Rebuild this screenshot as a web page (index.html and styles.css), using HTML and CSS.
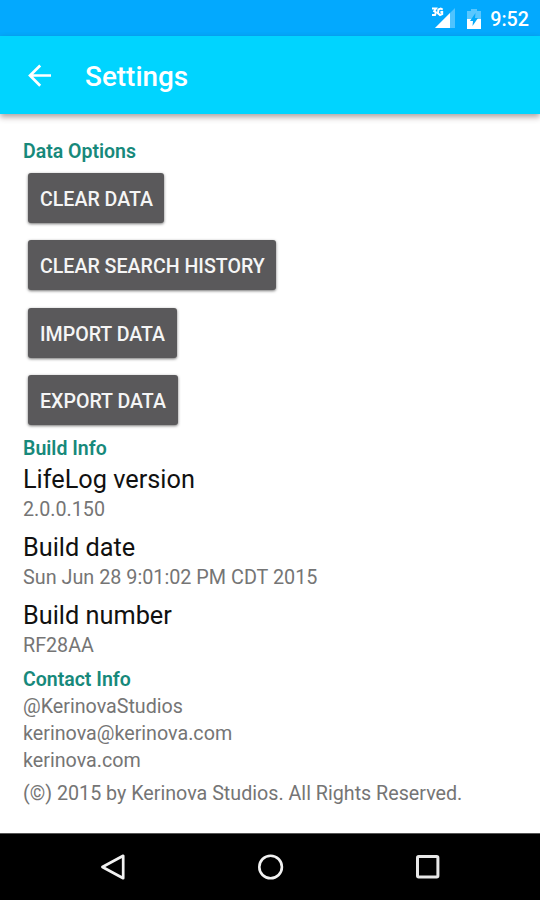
FILE: index.html
```html
<!DOCTYPE html>
<html lang="en">
<head>
<meta charset="utf-8">
<title>Settings</title>
<link rel="stylesheet" href="styles.css">
</head>
<body>
<div class="status-bar">
  <svg class="signal" width="25" height="22" viewBox="0 0 25 22">
    <path d="M24 1V21H4Z" fill="#fff" fill-opacity=".3"/>
    <path d="M19 6V21H4Z" fill="#fff"/>
    <path d="M1 1.5H5L3.2 4.2L5 5.4L4 8H1M11.7 2.6L9.8 1.5L7.4 2.5L7 6.4L9 8L11.2 7V5H9.4" fill="none" stroke="#fff" stroke-width="2"/>
  </svg>
  <svg class="battery" width="14" height="20" viewBox="0 0 14 20">
    <path d="M4 0H10V2H14V10H0V2H4Z" fill="#fff" fill-opacity=".35"/>
    <path d="M0 10H14V20H0Z" fill="#fff"/>
    <path d="M8.5 4L8 9H11L5.5 17L6 12H3Z" fill="#03a9f9"/>
  </svg>
  <span class="clock">9:52</span>
</div>
<header class="app-bar">
  <svg class="back" width="24" height="24" viewBox="0 0 24 24">
    <path d="M12.2 1.5L2 11.5L12.2 21.8M2 11.5H23" fill="none" stroke="#fff" stroke-width="2.7"/>
  </svg>
  <h1 class="title">Settings</h1>
</header>
<main class="content">
  <h2 class="heading">Data Options</h2>
  <div class="buttons">
    <button class="button clear">CLEAR DATA</button>
    <button class="button history">CLEAR SEARCH HISTORY</button>
    <button class="button import">IMPORT DATA</button>
    <button class="button export">EXPORT DATA</button>
  </div>
  <h2 class="heading build">Build Info</h2>
  <div class="item"><div class="name">LifeLog version</div><div class="value">2.0.0.150</div></div>
  <div class="item"><div class="name">Build date</div><div class="value date">Sun Jun 28 9:01:02 PM CDT 2015</div></div>
  <div class="item"><div class="name">Build number</div><div class="value">RF28AA</div></div>
  <h2 class="heading contact">Contact Info</h2>
  <div class="line">@KerinovaStudios</div>
  <div class="line">kerinova@kerinova.com</div>
  <div class="line">kerinova.com</div>
  <div class="line copyright">(©) 2015 by Kerinova Studios. All Rights Reserved.</div>
</main>
<nav class="nav-bar">
  <svg width="28" height="28" viewBox="0 0 28 28"><path d="M24.2 2.8V25.2L3.4 14Z" fill="none" stroke="#f2f2f2" stroke-width="2.7" stroke-linejoin="round"/></svg>
  <svg width="28" height="28" viewBox="0 0 28 28"><circle cx="13.6" cy="14" r="11.3" fill="none" stroke="#f2f2f2" stroke-width="2.6"/></svg>
  <svg width="28" height="28" viewBox="0 0 28 28"><rect x="3.5" y="3.6" width="20.4" height="20.4" rx="1.2" fill="none" stroke="#e8e8e8" stroke-width="3"/></svg>
</nav>
</body>
</html>
```
FILE: styles.css
```css
* { box-sizing: border-box; }

body {
  margin: 0;
  width: 540px;
  height: 900px;
  display: flex;
  flex-direction: column;
  overflow: hidden;
  background: #fff;
  color: #757575;
  font-family: Roboto, sans-serif;
  font-size: 19.7px;
}

h1, h2 { margin: 0; font-weight: 500; }

.status-bar {
  height: 36px;
  flex: none;
  display: flex;
  align-items: center;
  justify-content: flex-end;
  padding: 2px 11px 0 0;
  background: #03a9fe;
  color: #fff;
}
.signal { margin: 0 11px 2px 0; }
.battery { margin: 0 9px 0 0; }
.clock { font-weight: 500; font-size: 19.7px; line-height: 36px; margin-top: 2px; }

.app-bar {
  height: 78px;
  flex: none;
  display: flex;
  align-items: center;
  padding: 1px 0 0 28px;
  background: #00d4ff;
  color: #fff;
  box-shadow: 0 3px 6px rgba(60, 30, 30, .42);
}
.title { margin: 3px 0 0 33px; font-size: 27.9px; line-height: 34px; }

.content { flex: 1; padding: 27px 23px 0; }
.heading { font-size: 19.5px; font-weight: 600; line-height: 22px; color: #17897b; }

.buttons {
  display: flex;
  flex-direction: column;
  align-items: flex-start;
  gap: 17.5px;
  padding: 9.5px 5px 0 5.4px;
}
.button {
  height: 50px;
  padding: 0 0 0 11.6px;
  border: 0;
  border-radius: 3px;
  background: #5a595b;
  color: #f5f5f5;
  font: 500 19.6px/53px Roboto, sans-serif;
  text-align: left;
  white-space: nowrap;
  box-shadow: 0 1px 3px rgba(0, 0, 0, .55);
}
.clear { width: 135.6px; }
.history { width: 247.6px; }
.import { width: 148.6px; }
.export { width: 149.6px; }

.build { margin-top: 12.5px; }
.item { height: 68.2px; padding-top: 4px; }
.name { font-size: 25.3px; line-height: 32px; color: #111; }
.value { line-height: 27px; }
.date { font-size: 19.8px; }
.contact { margin: 5px 0 3px; }
.line { line-height: 26.8px; }
.copyright { margin-top: 7px; }

.nav-bar {
  height: 67px;
  flex: none;
  display: flex;
  align-items: center;
  justify-content: space-between;
  padding: 0 98px 0 99px;
  background: #000;
  border-top: 1px solid #555;
}
```
